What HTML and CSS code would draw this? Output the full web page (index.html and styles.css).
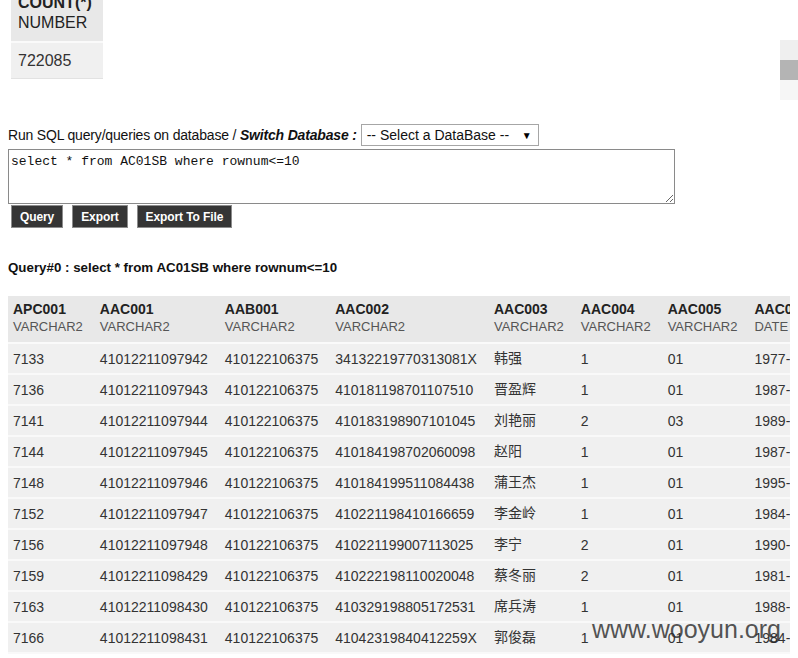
FILE: index.html
```html
<!DOCTYPE html>
<html>
<head>
<meta charset="utf-8">
<title>SQL Query</title>
<link rel="stylesheet" href="styles.css">
</head>
<body>
<div class="page">
  <table class="count-table">
    <thead>
      <tr><th><b>COUNT(*)</b><br>NUMBER</th></tr>
    </thead>
    <tbody>
      <tr><td>722085</td></tr>
    </tbody>
  </table>

  <form class="sql-form">
    <div class="db-line">
      <span class="db-label">Run SQL query/queries on database / <em>Switch Database :</em></span>
      <div class="db-select"><span>-- Select a DataBase --</span><span class="arrow">&#9660;</span></div>
    </div>
    <textarea class="sql-input">select * from AC01SB where rownum&lt;=10</textarea>
    <div class="actions">
      <button type="button" class="btn">Query</button>
      <button type="button" class="btn">Export</button>
      <button type="button" class="btn">Export To File</button>
    </div>
  </form>

  <div class="query-title">Query#0 : select * from AC01SB where rownum&lt;=10</div>

  <table class="result">
    <thead>
      <tr>
        <th><b>APC001</b><br><span>VARCHAR2</span></th>
        <th><b>AAC001</b><br><span>VARCHAR2</span></th>
        <th><b>AAB001</b><br><span>VARCHAR2</span></th>
        <th><b>AAC002</b><br><span>VARCHAR2</span></th>
        <th><b>AAC003</b><br><span>VARCHAR2</span></th>
        <th><b>AAC004</b><br><span>VARCHAR2</span></th>
        <th><b>AAC005</b><br><span>VARCHAR2</span></th>
        <th><b>AAC006</b><br><span>DATE</span></th>
        <th><b>AAC007</b><br><span>VARCHAR2</span></th>
      </tr>
    </thead>
    <tbody>
      <tr><td>7133</td><td>41012211097942</td><td>410122106375</td><td>34132219770313081X</td><td class="cjk">韩强</td><td>1</td><td>01</td><td>1977-03-13</td><td>1</td></tr>
      <tr><td>7136</td><td>41012211097943</td><td>410122106375</td><td>410181198701107510</td><td class="cjk">晋盈辉</td><td>1</td><td>01</td><td>1987-01-10</td><td>1</td></tr>
      <tr><td>7141</td><td>41012211097944</td><td>410122106375</td><td>410183198907101045</td><td class="cjk">刘艳丽</td><td>2</td><td>03</td><td>1989-07-10</td><td>1</td></tr>
      <tr><td>7144</td><td>41012211097945</td><td>410122106375</td><td>410184198702060098</td><td class="cjk">赵阳</td><td>1</td><td>01</td><td>1987-02-06</td><td>1</td></tr>
      <tr><td>7148</td><td>41012211097946</td><td>410122106375</td><td>410184199511084438</td><td class="cjk">蒲王杰</td><td>1</td><td>01</td><td>1995-11-08</td><td>1</td></tr>
      <tr><td>7152</td><td>41012211097947</td><td>410122106375</td><td>410221198410166659</td><td class="cjk">李金岭</td><td>1</td><td>01</td><td>1984-10-16</td><td>1</td></tr>
      <tr><td>7156</td><td>41012211097948</td><td>410122106375</td><td>410221199007113025</td><td class="cjk">李宁</td><td>2</td><td>01</td><td>1990-07-11</td><td>1</td></tr>
      <tr><td>7159</td><td>41012211098429</td><td>410122106375</td><td>410222198110020048</td><td class="cjk">蔡冬丽</td><td>2</td><td>01</td><td>1981-10-02</td><td>1</td></tr>
      <tr><td>7163</td><td>41012211098430</td><td>410122106375</td><td>410329198805172531</td><td class="cjk">席兵涛</td><td>1</td><td>01</td><td>1988-05-17</td><td>1</td></tr>
      <tr><td>7166</td><td>41012211098431</td><td>410122106375</td><td>41042319840412259X</td><td class="cjk">郭俊磊</td><td>1</td><td>01</td><td>1984-04-12</td><td>1</td></tr>
    </tbody>
  </table>
</div>

<div class="scrollbar">
  <div class="sb-track"></div>
  <div class="sb-thumb"></div>
  <div class="sb-track sb-track-end"></div>
</div>

<div class="watermark">www.wooyun.org</div>
</body>
</html>
```

FILE: styles.css
```css
html {
  overflow: hidden;
  background: #fff;
}

body {
  margin: 0 8px;
  font-family: "Liberation Sans", Arial, "Noto Sans CJK SC", sans-serif;
  color: #333;
  font-size: 14px;
}

.page {
  display: flex;
  flex-direction: column;
  align-items: flex-start;
}

/* top count table (scrolled partially out of view) */
.count-table {
  margin-top: -15px;
  margin-left: 3px;
  border-collapse: collapse;
  font-size: 16px;
  line-height: 20px;
}

.count-table th {
  text-align: left;
  font-weight: normal;
  background: #e8e8e8;
  padding: 8px 11px 8px 7px;
  border-bottom: 2px solid #fafafa;
  color: #222;
}

.count-table td {
  background: #f0f0f0;
  padding: 8px 11px 7px 7px;
  border-bottom: 1px solid #e2e2e2;
}

/* SQL form */
.sql-form {
  margin: 45px 0 0;
  display: flex;
  flex-direction: column;
  align-items: flex-start;
}

.db-line {
  display: flex;
  align-items: center;
  gap: 4px;
  height: 22px;
  color: #111;
}

.db-label {
  letter-spacing: -0.18px;
}

.db-label em {
  font-weight: bold;
}

.db-select {
  box-sizing: border-box;
  width: 178px;
  height: 22px;
  border: 1px solid #a6a6a6;
  display: flex;
  align-items: center;
  justify-content: space-between;
  padding: 0 6px 0 5px;
  color: #111;
  background: #fff;
}

.db-select .arrow {
  font-size: 10px;
  color: #000;
}

.sql-input {
  display: block;
  box-sizing: border-box;
  width: 667px;
  height: 55px;
  margin: 3px 0 0;
  padding: 4px 2px 2px;
  border: 1px solid #8a8a8a;
  font-family: "Liberation Mono", "Courier New", monospace;
  font-size: 13px;
  line-height: 15px;
  color: #111;
  resize: both;
}

.actions {
  display: flex;
  gap: 9px;
  margin: 1px 0 0 3px;
}

.btn {
  box-sizing: border-box;
  height: 23px;
  padding: 0 8px;
  background: #353535;
  color: #fff;
  border: 1px solid #8c8c8c;
  border-radius: 0;
  font-family: "Liberation Sans", Arial, sans-serif;
  font-weight: bold;
  font-size: 12px;
  letter-spacing: -0.1px;
}

.query-title {
  margin-top: 32px;
  font-size: 13.33px;
  line-height: 16px;
  font-weight: bold;
  color: #111;
}

/* result table */
.result {
  margin-top: 20px;
  border-collapse: collapse;
  white-space: nowrap;
}

.result th {
  text-align: left;
  font-weight: normal;
  background: #e8e8e8;
  padding: 5px 12px 7px 5px;
  line-height: 17px;
  border-bottom: 2px solid #fafafa;
}

.result th b {
  font-size: 14px;
  color: #222;
}

.result th span {
  font-size: 13px;
  color: #555;
}

.result td {
  background: #f0f0f0;
  padding: 7px 12px 5px 5px;
  line-height: 17px;
  border-bottom: 2px solid #f9f9f9;
}

.result td.cjk {
  font-family: "Noto Sans CJK SC", sans-serif;
  font-size: 14px;
  padding-top: 5px;
  padding-bottom: 7px;
}

/* fragment of an inner scrollbar on the right edge */
.scrollbar {
  position: absolute;
  top: 40px;
  right: 0;
  width: 18px;
  display: flex;
  flex-direction: column;
}

.sb-track {
  height: 20px;
  background: #efefef;
}

.sb-thumb {
  height: 20px;
  background: #b4b4b4;
}

.sb-track-end {
  background: #f6f6f6;
}

.watermark {
  position: absolute;
  left: 592px;
  top: 615px;
  font-family: "Liberation Sans", Arial, sans-serif;
  font-size: 25px;
  color: rgba(40, 40, 40, 0.8);
}
```
